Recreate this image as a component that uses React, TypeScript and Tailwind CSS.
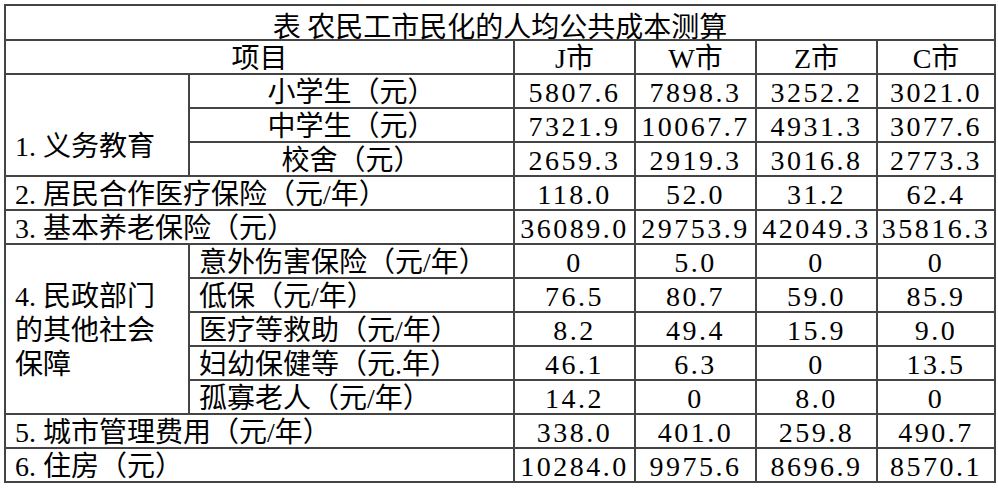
type Row = {
  label: string;
  values: string[];
};

const cities = ["J市", "W市", "Z市", "C市"];

const education: Row[] = [
  { label: "小学生（元）", values: ["5807.6", "7898.3", "3252.2", "3021.0"] },
  { label: "中学生（元）", values: ["7321.9", "10067.7", "4931.3", "3077.6"] },
  { label: "校舍（元）", values: ["2659.3", "2919.3", "3016.8", "2773.3"] },
];

const civil: Row[] = [
  { label: "意外伤害保险（元/年）", values: ["0", "5.0", "0", "0"] },
  { label: "低保（元/年）", values: ["76.5", "80.7", "59.0", "85.9"] },
  { label: "医疗等救助（元/年）", values: ["8.2", "49.4", "15.9", "9.0"] },
  { label: "妇幼保健等（元.年）", values: ["46.1", "6.3", "0", "13.5"] },
  { label: "孤寡老人（元/年）", values: ["14.2", "0", "8.0", "0"] },
];

const cell = "border-2 border-[#444] p-0 pt-[4px] leading-none";

function Values({ values }: { values: string[] }) {
  return (
    <>
      {values.map((v, i) => (
        <td key={i} className={`${cell} text-center tracking-[2.5px]`}>
          {v}
        </td>
      ))}
    </>
  );
}

export default function App() {
  return (
    <div className="w-[998px] h-[490px] bg-white pt-[4px] pl-[4px]">
      <table
        className="border-collapse table-fixed w-[990px] text-black text-[28px]"
        style={{ fontFamily: '"Liberation Serif", "Noto Sans CJK SC", serif' }}
      >
        <colgroup>
          <col className="w-[184px]" />
          <col className="w-[325px]" />
          <col className="w-[121px]" />
          <col className="w-[121px]" />
          <col className="w-[121px]" />
          <col className="w-[118px]" />
        </colgroup>
        <tbody>
          <tr className="h-[35px]">
            <td
              colSpan={6}
              className={`${cell} text-center text-[28px] font-['Noto_Sans_CJK_SC',sans-serif]`}
            >
              表 农民工市民化的人均公共成本测算
            </td>
          </tr>
          <tr className="h-[34px]">
            <td colSpan={2} className={`${cell} text-center`}>
              项目
            </td>
            {cities.map((c) => (
              <td key={c} className={`${cell} text-center`}>
                {c}
              </td>
            ))}
          </tr>
          {education.map((r, i) => (
            <tr key={r.label} className="h-[34px]">
              {i === 0 && (
                <td rowSpan={3} className={`${cell} align-top pl-[9px] !pt-[58px]`}>
                  1. 义务教育
                </td>
              )}
              <td className={`${cell} text-center`}>{r.label}</td>
              <Values values={r.values} />
            </tr>
          ))}
          <tr className="h-[34px]">
            <td colSpan={2} className={`${cell} pl-[9px]`}>
              2. 居民合作医疗保险（元/年）
            </td>
            <Values values={["118.0", "52.0", "31.2", "62.4"]} />
          </tr>
          <tr className="h-[34px]">
            <td colSpan={2} className={`${cell} pl-[9px]`}>
              3. 基本养老保险（元）
            </td>
            <Values values={["36089.0", "29753.9", "42049.3", "35816.3"]} />
          </tr>
          {civil.map((r, i) => (
            <tr key={r.label} className="h-[34px]">
              {i === 0 && (
                <td rowSpan={5} className={`${cell} pl-[9px] !leading-[34px]`}>
                  4. 民政部门
                  <br />
                  的其他社会
                  <br />
                  保障
                </td>
              )}
              <td className={`${cell} pl-[9px]`}>{r.label}</td>
              <Values values={r.values} />
            </tr>
          ))}
          <tr className="h-[34px]">
            <td colSpan={2} className={`${cell} pl-[9px]`}>
              5. 城市管理费用（元/年）
            </td>
            <Values values={["338.0", "401.0", "259.8", "490.7"]} />
          </tr>
          <tr className="h-[34px]">
            <td colSpan={2} className={`${cell} pl-[9px]`}>
              6. 住房（元）
            </td>
            <Values values={["10284.0", "9975.6", "8696.9", "8570.1"]} />
          </tr>
        </tbody>
      </table>
    </div>
  );
}
